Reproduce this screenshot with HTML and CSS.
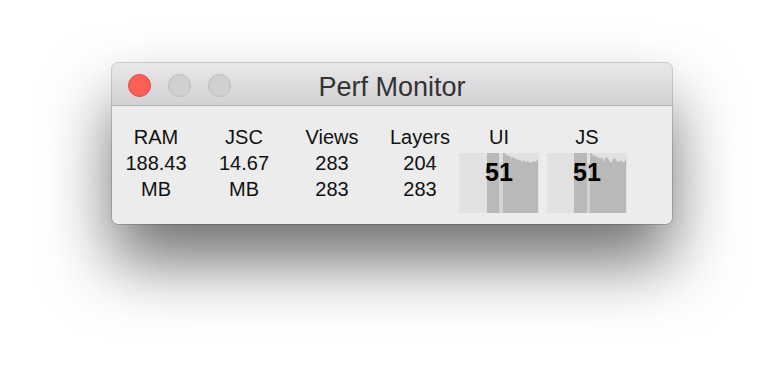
FILE: index.html
```html
<!DOCTYPE html>
<html lang="en">
<head>
  <meta charset="UTF-8" />
  <meta name="viewport" content="width=device-width, initial-scale=1.0"/>
  <title>Perf Monitor</title>
  <link rel="stylesheet" href="styles.css">
</head>
<body>
  <div class="window">
    <div class="titlebar">
      <div class="lights">
        <span class="light close"></span>
        <span class="light"></span>
        <span class="light"></span>
      </div>
      <div class="title">Perf Monitor</div>
      <div></div>
    </div>

    <div class="content">
      <div class="stat">RAM<br>188.43<br>MB</div>
      <div class="stat">JSC<br>14.67<br>MB</div>
      <div class="stat">Views<br>283<br>283</div>
      <div class="stat">Layers<br>204<br>283</div>

      <div class="meter first">
        <div class="meter-label">UI</div>
        <div class="graph">
          <svg width="80" height="60" viewBox="0 0 80 60">
            <rect width="80" height="60" fill="#e1e1e1"/>
            <polygon fill="#b9b9b9" points="28,60 28,0 40,0 40,60"/>
            <polygon fill="#d3d3d3" points="40,60 40,9 44,9 44,60"/>
            <polygon fill="#b9b9b9" points="44,60 44,0 46,0 47,2 49,3 50,2 52,5 54,4 56,6 57,5 59,8 61,6 63,9 65,7 67,9 69,8 71,10 73,9 75,8 77,9 78,7 79,7 79,60"/>
          </svg>
          <span class="fps">51</span>
        </div>
      </div>

      <div class="meter">
        <div class="meter-label">JS</div>
        <div class="graph">
          <svg width="80" height="60" viewBox="0 0 80 60">
            <rect width="80" height="60" fill="#e1e1e1"/>
            <polygon fill="#b9b9b9" points="27,60 27,0 40,0 40,60"/>
            <polygon fill="#d3d3d3" points="40,60 40,10 43,10 43,60"/>
            <polygon fill="#b9b9b9" points="43,60 43,0 45,0 46,3 48,2 50,5 51,3 53,6 55,4 57,9 58,5 60,4 62,7 64,10 66,6 68,5 70,8 72,9 74,7 76,10 78,8 79,6 79,60"/>
          </svg>
          <span class="fps">51</span>
        </div>
      </div>
    </div>
  </div>
</body>
</html>
```

FILE: styles.css
```css
html, body {
  margin: 0;
  background: #fff;
  font-family: 'Liberation Sans', Arial, sans-serif;
}
body {
  min-height: 384px;
  padding-top: 63px;
  box-sizing: border-box;
}
.window {
  width: 560px;
  height: 161px;
  margin-left: 112px;
  border-radius: 6px;
  background: #ececec;
  overflow: hidden;
  box-shadow: 0 0 0 1px rgba(0, 0, 0, 0.16), 0 38px 66px rgba(0, 0, 0, 0.56);
}
.titlebar {
  height: 42px;
  display: grid;
  grid-template-columns: 1fr auto 1fr;
  align-items: center;
  background: linear-gradient(#e9e7e9, #d3d1d3);
  border-bottom: 1px solid #b3b3b3;
}
.lights {
  display: flex;
  gap: 17px;
  padding: 3px 0 0 16px;
}
.light {
  width: 21px;
  height: 21px;
  border-radius: 50%;
  background: #d0d0d0;
  border: 1px solid #bcbcbc;
}
.light.close {
  background: #fd5f57;
  border-color: #df4a43;
}
.title {
  font-size: 27px;
  line-height: 30px;
  padding-top: 6px;
  color: #333;
}
.content {
  display: flex;
  padding-top: 18px;
  color: #111;
  font-size: 20px;
  line-height: 26px;
}
.stat {
  width: 88px;
  text-align: center;
}
.meter {
  width: 80px;
  margin-left: 8px;
  text-align: center;
}
.meter.first {
  margin-left: -5px;
}
.graph {
  position: relative;
  height: 60px;
  margin-top: 3px;
}
.graph svg {
  display: block;
}
.fps {
  position: absolute;
  left: 0;
  right: 0;
  top: 7px;
  font-size: 25px;
  line-height: 25px;
  font-weight: bold;
  color: #000;
}
```
